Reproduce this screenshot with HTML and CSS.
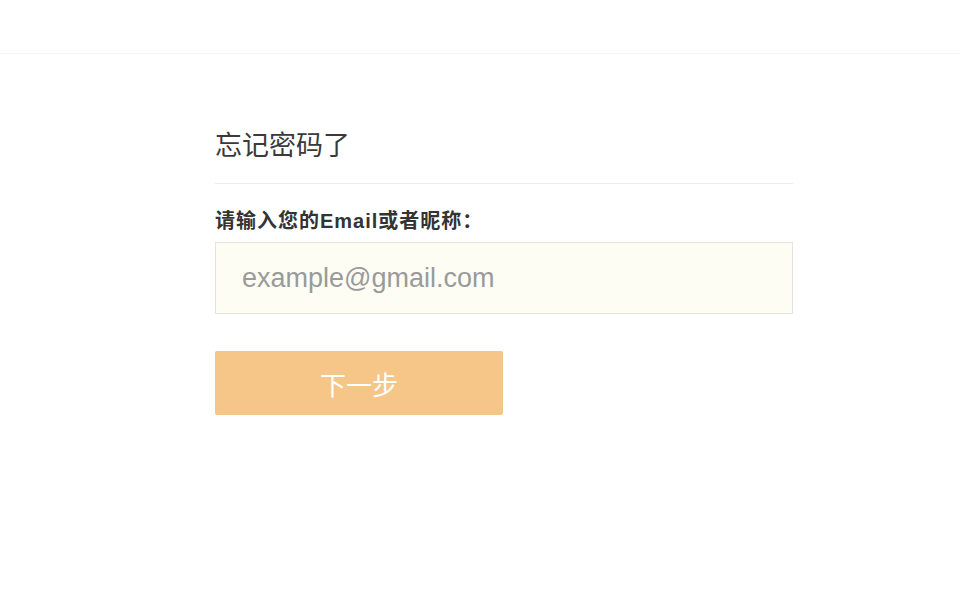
FILE: index.html
```html
<!DOCTYPE html>
<html lang="zh-CN">
<head>
<meta charset="utf-8">
<title>忘记密码了</title>
<link rel="stylesheet" href="styles.css">
</head>
<body>
<header class="topbar"></header>
<main class="panel">
  <h1 class="title">忘记密码了</h1>
  <form class="form">
    <label class="label" for="account">请输入您的Email或者昵称：</label>
    <input class="field" id="account" type="text" placeholder="example@gmail.com">
    <button class="btn" type="button">下一步</button>
  </form>
</main>
</body>
</html>
```

FILE: styles.css
```css
html, body {
  margin: 0;
  padding: 0;
  background: #ffffff;
}
body {
  font-family: "Liberation Sans", "Noto Sans CJK SC", sans-serif;
  color: #333333;
}
.topbar {
  height: 53px;
  border-bottom: 1px solid #f6f6f6;
}
.panel {
  width: 578px;
  margin: 0 0 0 215px;
  padding-top: 74px;
}
.title {
  margin: 0;
  font-size: 27px;
  font-weight: normal;
  line-height: 36px;
  color: #3a3a3a;
  padding-bottom: 19px;
  border-bottom: 1px solid #ededed;
}
.form {
  display: flex;
  flex-direction: column;
  align-items: flex-start;
  padding-top: 25px;
}
.label {
  font-size: 20px;
  font-weight: bold;
  line-height: 24px;
  letter-spacing: 1px;
  color: #333333;
  margin-bottom: 9px;
}
.field {
  box-sizing: border-box;
  width: 578px;
  height: 72px;
  margin: 0;
  padding: 0 0 0 26px;
  border: 1px solid #e4e4dc;
  background: #fdfdf3;
  font-family: "Liberation Sans", "Noto Sans CJK SC", sans-serif;
  font-size: 27px;
  color: #555555;
  outline: none;
}
.field::placeholder {
  color: #9a9a9a;
}
.btn {
  margin-top: 37px;
  width: 288px;
  height: 64px;
  border: none;
  border-radius: 2px;
  background: #f5c688;
  color: #ffffff;
  font-family: "Liberation Sans", "Noto Sans CJK SC", sans-serif;
  font-size: 26px;
  padding: 0;
  cursor: pointer;
}
```
